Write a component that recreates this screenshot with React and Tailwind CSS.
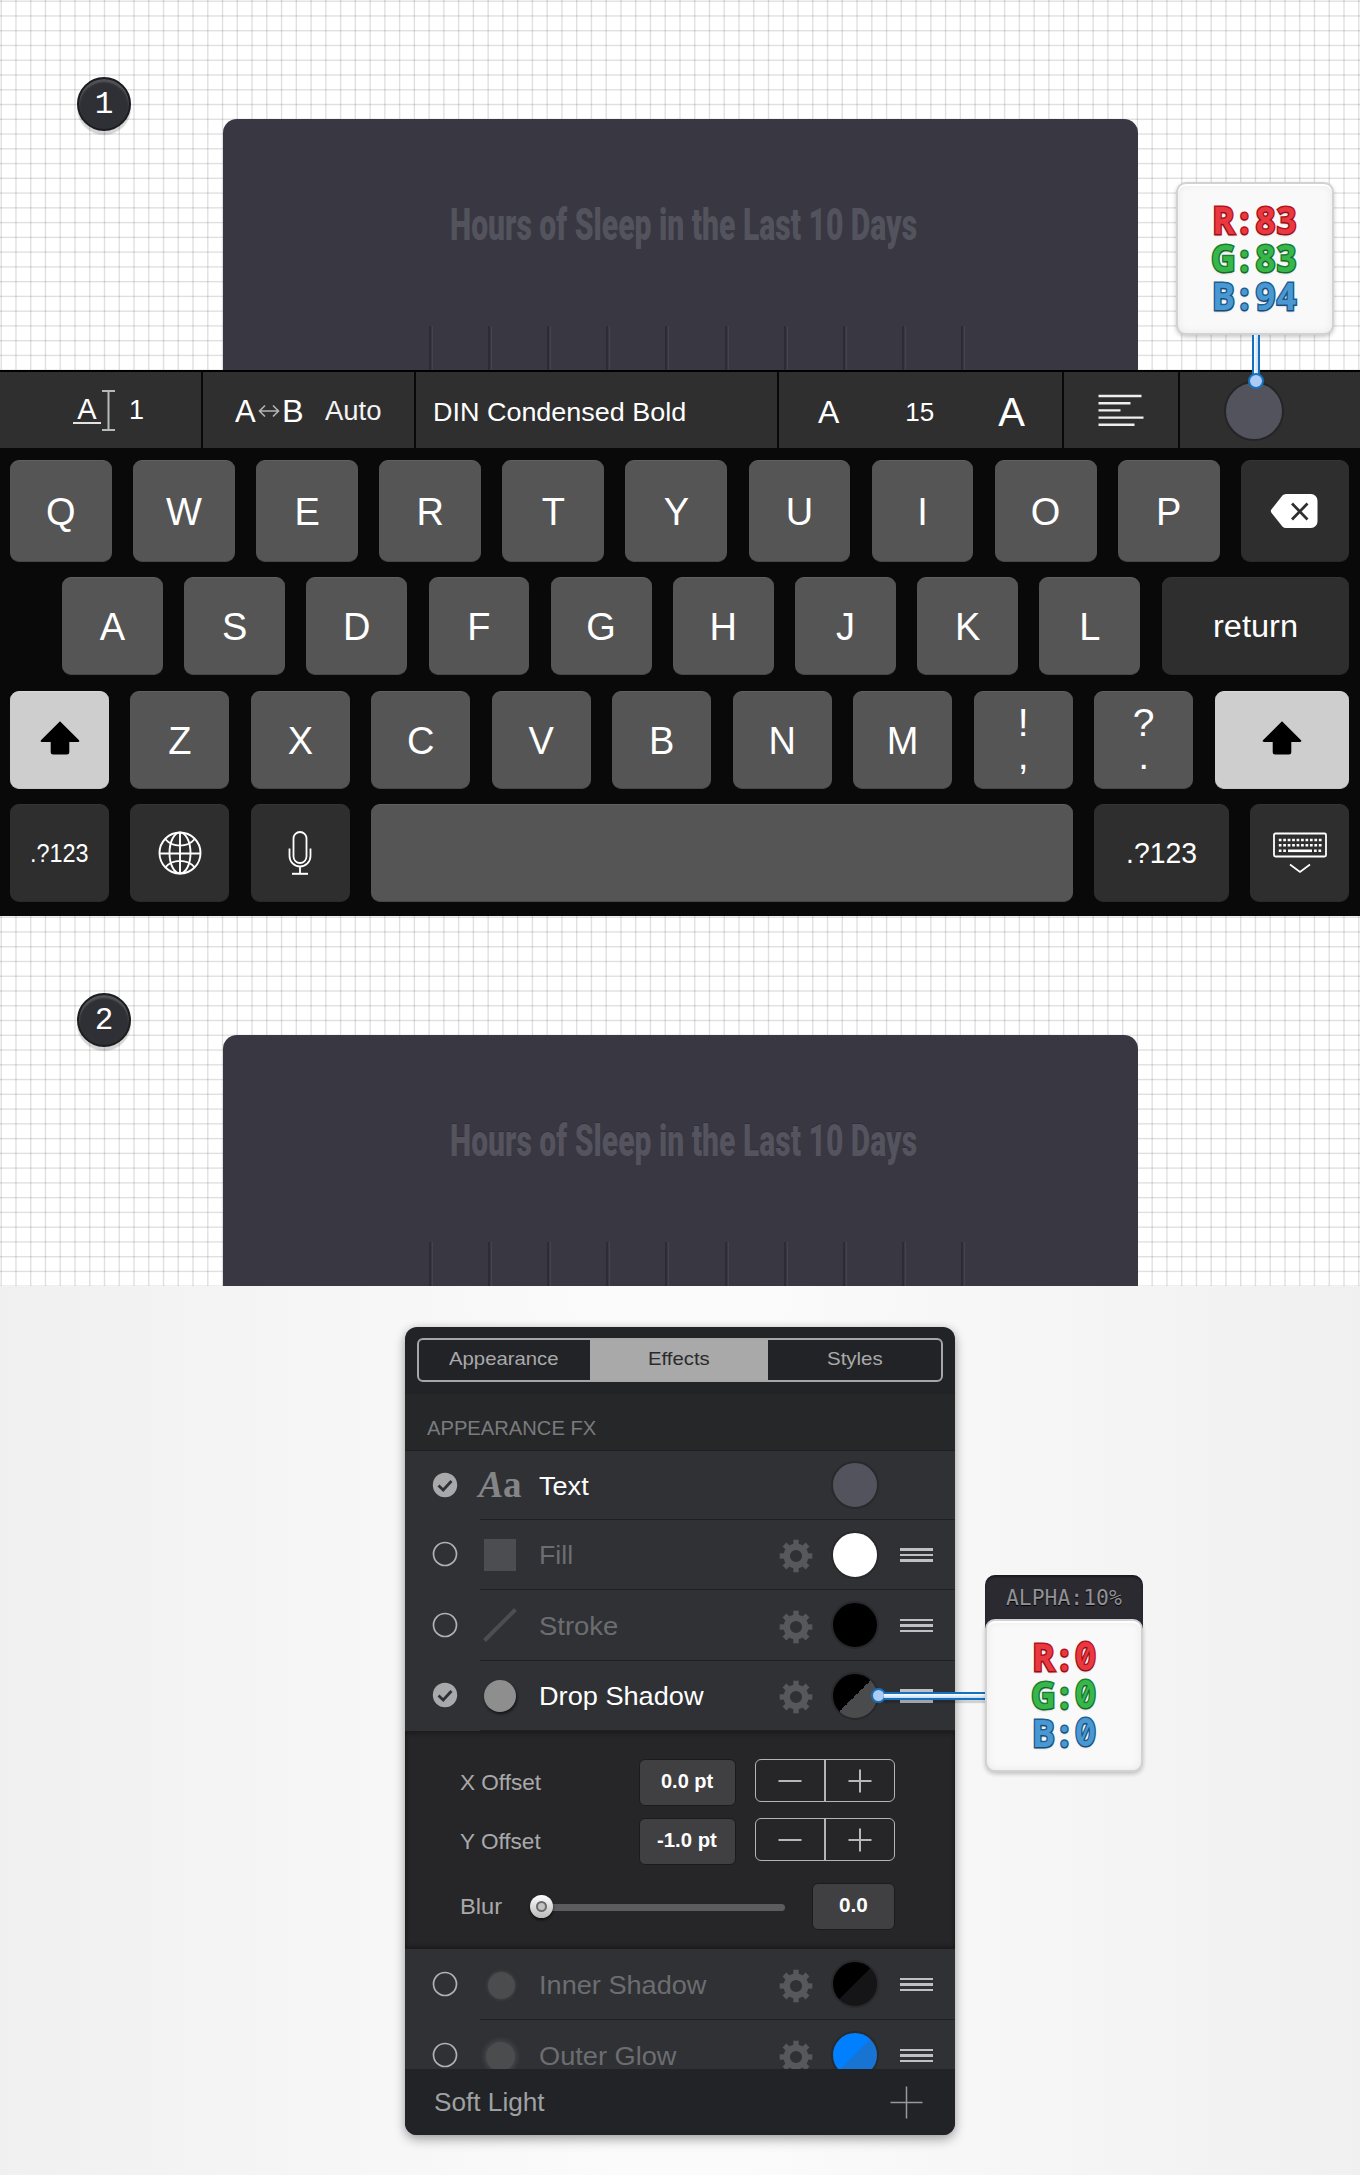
import { useLayoutEffect, useRef, useState } from "react";

const SANS = "font-['Liberation_Sans',Arial,sans-serif]";

/* Single-line label stretched horizontally so that it occupies exactly `w` pixels. */
function Fit({ w, className = "", children }) {
  const ref = useRef(null);
  const [scale, setScale] = useState(1);
  useLayoutEffect(() => {
    if (ref.current) setScale(w / ref.current.offsetWidth);
  }, [w, children]);
  return (
    <span className="block shrink-0" style={{ width: w }}>
      <span
        ref={ref}
        className={`inline-block origin-left whitespace-nowrap ${className}`}
        style={{ transform: `scaleX(${scale})` }}
      >
        {children}
      </span>
    </span>
  );
}

/* ---------- Canvas preview ---------- */

function CanvasPreview({ step, etched }) {
  return (
    <section className="relative flex h-[370px] justify-center overflow-hidden bg-white bg-[repeating-linear-gradient(to_right,rgba(0,0,0,0)_0px,rgba(0,0,0,0.12)_1px,rgba(0,0,0,0.12)_1.4px,rgba(0,0,0,0)_2.4px,rgba(0,0,0,0)_14.756px),repeating-linear-gradient(to_bottom,rgba(0,0,0,0)_0px,rgba(0,0,0,0.12)_1px,rgba(0,0,0,0.12)_1.4px,rgba(0,0,0,0)_2.4px,rgba(0,0,0,0)_14.76px)]">
      <div className="absolute left-[77px] top-[77px] flex size-[54px] items-center justify-center rounded-full border-2 border-[#1c1d20] bg-[#2f3035] shadow-[0_4px_1px_rgba(0,0,0,0.16),inset_0_3px_2px_rgba(255,255,255,0.18)]">
        <span className="font-['Liberation_Mono',monospace] text-[31px] leading-none text-white">{step}</span>
      </div>
      <div className="mt-[119px] flex w-[915px] flex-col items-center rounded-t-[14px] bg-[#383742]">
        <div className="ml-[7px] mt-[80px] h-[52px]">
          <Fit
            w={467}
            className={
              etched
                ? "font-[Roboto,sans-serif] text-[44px] font-black leading-[52px] text-[#54535e] [text-shadow:0_-1px_0_#302f39]"
                : "font-[Roboto,sans-serif] text-[44px] font-black leading-[52px] text-[#53535d]"
            }
          >
            Hours of Sleep in the Last 10 Days
          </Fit>
        </div>
        <div className="ml-[34px] mt-auto flex h-[44px] w-[536px] justify-between">
          {Array.from({ length: 10 }, (_, i) => (
            <i key={i} className="h-full w-[4px] border-l-2 border-r border-l-[#2d2c36] border-r-[#44434e]" />
          ))}
        </div>
      </div>
    </section>
  );
}

/* ---------- Text toolbar ---------- */

function Toolbar() {
  return (
    <div className={`relative flex h-[78px] border-t-2 border-black bg-[#2f2f2f] pt-px leading-none text-white ${SANS}`}>
      <div className="-mt-px flex w-[203px] items-center border-r-2 border-[#080808] pl-[73px] pt-px">
        <svg width="44" height="44" viewBox="0 0 44 44" fill="none" stroke="#e2e2e2" strokeWidth="2">
          <text x="4.2" y="29.5" fill="#fff" stroke="none" fontSize="29" fontFamily="Liberation Sans, sans-serif">A</text>
          <path d="M0 34h28" />
          <path d="M29 2h13M29 41h13M35.500 2v39" stroke="#b9b9b9" />
        </svg>
        <span className="ml-[12px] text-[27px]">1</span>
      </div>
      <div className="-mt-px flex w-[213px] items-center border-r-2 border-[#080808] pl-[32px] pt-[2px]">
        <span className="text-[31px]">A</span>
        <svg className="mx-[2px]" width="22" height="14" viewBox="0 0 22 14" fill="none" stroke="#b5b5b5" strokeWidth="1.6">
          <path d="M1.500 7h19M7 1.500L1.500 7L7 12.500M15 1.500L20.500 7L15 12.500" />
        </svg>
        <Fit w={22} className="text-[31px]">B</Fit>
        <span className="ml-[21px]"><Fit w={57} className="text-[27px] text-[#f3f3f3]">Auto</Fit></span>
      </div>
      <div className="-mt-px flex w-[363px] items-center border-r-2 border-[#080808] pl-[17px] pt-[3px]">
        <Fit w={253} className="text-[26px] leading-[30px]">DIN Condensed Bold</Fit>
      </div>
      <div className="-mt-px flex w-[285px] items-center border-r-2 border-[#080808] pl-[39px] pt-[3px]">
        <span className="text-[32px]">A</span>
        <span className="ml-[66px] text-[26px]">15</span>
        <span className="ml-[64px] text-[40px]">A</span>
      </div>
      <div className="-mt-px flex w-[116px] items-center border-r-2 border-[#080808] pl-[34px]">
        <svg width="46" height="34" viewBox="0 0 46 34" fill="none" stroke="#efefef" strokeWidth="2.4">
          <path d="M0.500 3h43M0.500 10.200h32M0.500 17.400h22M0.500 24.600h45M0.500 31.800h36" />
        </svg>
      </div>
      <div className="flex flex-1 items-center pl-[44px]">
        <span className="size-[60px] rounded-full border-2 border-[#252527] bg-[#53535e]" />
      </div>
    </div>
  );
}

/* ---------- Keyboard ---------- */

const KEY = "flex items-center justify-center rounded-[9px] border-t border-b";
const LIGHT = "border-t-[#606060] border-b-[#474747] bg-[#555555]";
const DARK = "border-t-[#343434] border-b-[#292929] bg-[#2e2e2e]";
const ACTIVE = "border-t-[#d8d8d8] border-b-[#c4c4c4] bg-[#cecece]";

function Letter({ c }) {
  return <div className={`${KEY} ${LIGHT} flex-1 pt-[2px] text-[38px] leading-none`}>{c}</div>;
}

function ShiftArrow() {
  return (
    <svg className="-mt-[4px]" width="40" height="34" viewBox="0 0 40 34">
      <path d="M20 0.300L38.800 19c1 1 .6 2-.7 2H29.300v10a2.500 2.500 0 0 1-2.500 2.500H13.200a2.500 2.500 0 0 1-2.500-2.500V21H1.900c-1.300 0-1.700-1-.7-2z" fill="#000" />
    </svg>
  );
}

function Backspace() {
  return (
    <svg className="mr-px" width="48" height="36" viewBox="0 0 48 36">
      <path d="M16 1h25a6.500 6.500 0 0 1 6.500 6.500v21A6.500 6.500 0 0 1 41 35H16a5 5 0 0 1-3.600-1.600L1.800 20.300a3.200 3.200 0 0 1 0-4.400L12.400 2.600A5 5 0 0 1 16 1z" fill="#fff" />
      <path d="M22 10.500L37.500 26.500M37.500 10.500L22 26.500" stroke="#2f2f2f" strokeWidth="2.700" />
    </svg>
  );
}

function GlobeIcon() {
  return (
    <svg className="ml-px" width="44" height="44" viewBox="0 0 44 44" fill="none" stroke="#fff" strokeWidth="1.900">
      <circle cx="22" cy="22" r="20.500" />
      <ellipse cx="22" cy="22" rx="10.500" ry="20.500" />
      <path d="M22 1.500v41M1.500 22.500h41M7.200 8c4 4.700 9 6.600 14.800 6.600S32.800 12.700 36.800 8M7.200 36.500c4-4.700 9-6.600 14.800-6.600s10.800 1.900 14.800 6.600" />
    </svg>
  );
}

function MicIcon() {
  return (
    <svg width="24" height="44" viewBox="0 0 24 44" fill="none" stroke="#fff" strokeWidth="1.800">
      <rect x="5.500" y="1" width="13" height="31" rx="6.500" />
      <path d="M1.500 17.500v7.500a10.500 10.500 0 0 0 21 0v-7.500M12 35.500v7" />
      <path d="M4 42.800h16" strokeWidth="2" />
    </svg>
  );
}

function HideKeyboardIcon() {
  return (
    <svg className="-mt-px" width="56" height="42" viewBox="0 0 56 42" fill="none" stroke="#fff">
      <rect x="2" y="1.500" width="52" height="23" rx="1.500" strokeWidth="1.800" />
      <path d="M6.800 8h43M6.800 13.300h43" strokeWidth="2.600" strokeDasharray="2.700 1.750" />
      <path d="M6.800 18.800h7.200M42 18.800h7.800" strokeWidth="2.600" strokeDasharray="2.700 1.750" />
      <path d="M16 18.800h24" strokeWidth="2.600" />
      <path d="M18 32.500l10 7.500l10-7.500" strokeWidth="1.700" />
    </svg>
  );
}

function Keyboard() {
  return (
    <div className={`flex h-[468px] flex-col gap-[15px] bg-[#090909] pl-[10px] pr-[11px] pt-[12px] text-white ${SANS}`}>
      <div className="flex h-[102px] gap-[21.300px]">
        {"QWERTYUIOP".split("").map((c) => <Letter key={c} c={c} />)}
        <div className={`${KEY} ${DARK} w-[108px]`}><Backspace /></div>
      </div>
      <div className="flex h-[98px] gap-[21.300px] pl-[52px]">
        {"ASDFGHJKL".split("").map((c) => <Letter key={c} c={c} />)}
        <div className={`${KEY} ${DARK} w-[187.500px] leading-none`}>
          <Fit w={85} className="text-[31px] leading-none">return</Fit>
        </div>
      </div>
      <div className="mt-px flex h-[98px] gap-[21.300px]">
        <div className={`${KEY} ${ACTIVE} w-[99px]`}><ShiftArrow /></div>
        {"ZXCVBNM".split("").map((c) => <Letter key={c} c={c} />)}
        {["!,", "?."].map((p) => (
          <div key={p} className={`${KEY} ${LIGHT} flex-1 flex-col text-[39px] leading-[36px]`}>
            <span className="mt-[3px]">{p[0]}</span>
            <span className="-mt-[3px] mb-[5px]">{p[1]}</span>
          </div>
        ))}
        <div className={`${KEY} ${ACTIVE} w-[134.500px]`}><ShiftArrow /></div>
      </div>
      <div className="flex h-[98px] gap-[21.300px] leading-none">
        <div className={`${KEY} ${DARK} w-[99px]`}><Fit w={59} className="text-[25px] leading-none">.?123</Fit></div>
        <div className={`${KEY} ${DARK} w-[99px]`}><GlobeIcon /></div>
        <div className={`${KEY} ${DARK} w-[99px]`}><MicIcon /></div>
        <div className={`${KEY} ${LIGHT} flex-1`} />
        <div className={`${KEY} ${DARK} w-[134.500px]`}><Fit w={71} className="text-[30px] leading-none">.?123</Fit></div>
        <div className={`${KEY} ${DARK} w-[99px]`}><HideKeyboardIcon /></div>
      </div>
    </div>
  );
}

/* ---------- Colour callouts ---------- */

const CHANNELS = {
  R: "text-[#ea3840] [-webkit-text-stroke:3px_#b3131c]",
  G: "text-[#38b64a] [-webkit-text-stroke:3px_#177f34]",
  B: "text-[#4a98d2] [-webkit-text-stroke:3px_#1b5f94]",
};

function Channel({ name, value }) {
  return (
    <div className={`flex h-[38px] items-center justify-center text-[38px] font-bold leading-none [paint-order:stroke_fill] [text-shadow:0_2px_2px_rgba(0,0,0,0.2)] ${CHANNELS[name]}`}>
      {`${name}:${value}`.split("").map((c, i) => (
        <span
          key={i}
          className={
            c === "0"
              ? "flex w-[21px] scale-x-[0.82] justify-center font-[Inter,sans-serif] [font-feature-settings:'zero']"
              : "flex w-[21px] scale-x-[0.9] justify-center font-['Open_Sans','Noto_Sans',sans-serif]"
          }
        >
          {c}
        </span>
      ))}
    </div>
  );
}

function RgbCard({ r, g, b }) {
  return (
    <div className="h-[153px] w-[158px] rounded-[10px] border-2 border-[#d2d2d2] bg-[#f9f9f9] pt-[16px] shadow-[0_2px_4px_rgba(0,0,0,0.22),inset_0_2px_0_#fff,inset_0_0_8px_rgba(0,0,0,0.07)]">
      <Channel name="R" value={r} />
      <Channel name="G" value={g} />
      <Channel name="B" value={b} />
    </div>
  );
}

/* ---------- Effects panel ---------- */

function Gear() {
  return (
    <svg width="34" height="34" viewBox="-17 -17 34 34" fill="none" stroke="#57585b">
      <circle r="9.300" strokeWidth="6.400" />
      {[0, 45, 90, 135, 180, 225, 270, 315].map((a) => (
        <path key={a} d="M0-11V-16.300" strokeWidth="5.400" transform={`rotate(${a})`} />
      ))}
    </svg>
  );
}

function Toggle({ on }) {
  return on ? (
    <svg width="26" height="26" viewBox="0 0 26 26" fill="none">
      <circle cx="13" cy="13" r="12.200" fill="#a9a9ab" />
      <path d="M6.500 13.500l4.700 4.500l8.300-9" stroke="#303135" strokeWidth="2.800" />
    </svg>
  ) : (
    <svg width="26" height="26" viewBox="0 0 26 26" fill="none">
      <circle cx="13" cy="13" r="11.500" stroke="#b1b1b3" strokeWidth="1.700" />
    </svg>
  );
}

function Handle() {
  return (
    <div className="mt-px flex flex-col gap-[3px]">
      <i className="h-[2.500px] w-[33px] bg-[#c0bfc3]" />
      <i className="h-[2.500px] w-[33px] bg-[#c0bfc3]" />
      <i className="h-[2.500px] w-[33px] bg-[#c0bfc3]" />
    </div>
  );
}

function EffectRow({ on, icon, label, w, swatch, controls = true, height }) {
  return (
    <div className={`flex shrink-0 bg-[#303135] ${height}`}>
      <div className="flex w-[75px] items-center pb-[2px] pl-[27px]"><Toggle on={on} /></div>
      <div className="flex flex-1 items-center border-b border-[#1f2023]">
        <div className="flex w-[40px] justify-center">{icon}</div>
        <div className="w-[253px] pl-[19px] pt-[2px]">
          <Fit w={w} className={on ? "text-[26px] leading-[30px] text-white" : "text-[26px] leading-[30px] text-[#6c6d70]"}>{label}</Fit>
        </div>
        <div className="flex w-[45px] justify-center pt-[3px]">{controls && <Gear />}</div>
        <div className="flex w-[73px] justify-center">
          <span className={`size-[48px] rounded-full border-2 border-[#29292c] ${swatch}`} />
        </div>
        <div className="flex w-[50px] justify-center">{controls && <Handle />}</div>
      </div>
    </div>
  );
}

function ValueBox({ width, w, children }) {
  return (
    <div className={`flex h-[47px] items-center justify-center rounded-[6px] border border-[#1b1b1c] bg-[#404042] pr-px ${width}`}>
      <Fit w={w} className="text-[20px] font-bold leading-[24px] text-white">{children}</Fit>
    </div>
  );
}

function Stepper() {
  return (
    <div className="flex h-[43px] w-[140px] rounded-[6px] border-[1.500px] border-[#b4b4b6]">
      <div className="flex w-[70px] items-center justify-center border-r-2 border-[#b4b4b6]">
        <svg width="24" height="24" viewBox="0 0 24 24" stroke="#b8b8ba" strokeWidth="2"><path d="M0.500 12h23" /></svg>
      </div>
      <div className="flex flex-1 items-center justify-center">
        <svg width="24" height="24" viewBox="0 0 24 24" stroke="#b8b8ba" strokeWidth="2"><path d="M0.500 12h23M12 0.500v23" /></svg>
      </div>
    </div>
  );
}

function ShadowSettings() {
  return (
    <div className="h-[218px] shrink-0 bg-[#262628] pl-[55px] pt-[28px] text-[#a9a9ab] shadow-[inset_0_3px_4px_rgba(0,0,0,0.25),inset_0_-3px_4px_rgba(0,0,0,0.25)]">
      <div className="flex h-[46px] items-center">
        <div className="w-[179px]"><Fit w={81} className="text-[22px]">X Offset</Fit></div>
        <ValueBox width="w-[97px]" w={52}>0.0 pt</ValueBox>
        <div className="ml-[19px] pb-[3px]"><Stepper /></div>
      </div>
      <div className="mt-[13px] flex h-[46px] items-center">
        <div className="w-[179px]"><Fit w={81} className="text-[22px]">Y Offset</Fit></div>
        <ValueBox width="w-[97px]" w={60}>-1.0 pt</ValueBox>
        <div className="ml-[19px] pb-[3px]"><Stepper /></div>
      </div>
      <div className="mt-[19px] flex h-[46px] items-center">
        <div className="w-[70px]"><Fit w={42} className="text-[22px]">Blur</Fit></div>
        <span className="z-10 flex size-[23px] items-center justify-center rounded-full bg-gradient-to-b from-[#ffffff] to-[#b9b9b9] shadow-[0_2px_3px_rgba(0,0,0,0.6)]">
          <span className="size-[11px] rounded-full border-2 border-[#6a6a6a] bg-[#c2c2c2]" />
        </span>
        <span className="-ml-[4px] mt-[2px] h-[7px] w-[236px] rounded-r-full bg-[#5c5c5e]" />
        <div className="ml-[27px]"><ValueBox width="w-[83px]" w={29}>0.0</ValueBox></div>
      </div>
    </div>
  );
}

function EffectsPanel() {
  return (
    <div className={`flex h-[808px] w-[550px] flex-col overflow-hidden rounded-[12px] bg-[#222326] shadow-[0_5px_12px_rgba(0,0,0,0.3),0_0_8px_rgba(0,0,0,0.12)] ${SANS}`}>
      <div className="h-[67px] shrink-0 px-[12px] pt-[11px]">
        <div className="flex h-[44px] rounded-[6px] border-2 border-[#a6a6a8] text-[#a9a9ab]">
          <div className="flex w-[171px] items-center justify-center pb-[2px] pr-[2px]"><Fit w={109} className="text-[19px]">Appearance</Fit></div>
          <div className="flex w-[178px] items-center justify-center bg-[#a9a9aa] pb-[2px] text-[#2b2b2e]"><Fit w={62} className="text-[19px]">Effects</Fit></div>
          <div className="flex flex-1 items-center justify-center pb-[2px]"><Fit w={56} className="text-[19px]">Styles</Fit></div>
        </div>
      </div>
      <div className="flex h-[57px] shrink-0 items-center border-b border-[#1f2022] bg-[#262729] pl-[22px] pt-[14px]">
        <Fit w={169} className="text-[21px] leading-[24px] text-[#7a7b7d]">APPEARANCE FX</Fit>
      </div>
      <EffectRow
        on
        height="h-[69px]"
        label="Text"
        w={50}
        controls={false}
        swatch="bg-[#53535e]"
        icon={
          <span className="flex whitespace-nowrap font-['Liberation_Serif',serif] text-[37px] font-bold leading-[40px] text-[#848587]">
            <span className="italic">A</span>
            <span>a</span>
          </span>
        }
      />
      <EffectRow height="h-[70px]" label="Fill" w={34} swatch="bg-white" icon={<span className="size-[32px] bg-[#4c4d50]" />} />
      <EffectRow
        height="h-[71px]"
        label="Stroke"
        w={79}
        swatch="bg-black"
        icon={<svg width="34" height="34" viewBox="0 0 34 34"><path d="M1.500 32.500L32.500 1.500" stroke="#4d4e51" strokeWidth="4" /></svg>}
      />
      <EffectRow
        on
        height="h-[70px]"
        label="Drop Shadow"
        w={165}
        swatch="bg-[linear-gradient(135deg,#000_50%,#4a4b4c_50%)]"
        icon={<span className="size-[32px] rounded-full bg-[#8e8e8f] shadow-[1px_2px_3px_rgba(0,0,0,0.6)]" />}
      />
      <ShadowSettings />
      <EffectRow
        height="h-[71px]"
        label="Inner Shadow"
        w={167}
        swatch="bg-[linear-gradient(135deg,#000_50%,#151517_50%)]"
        icon={<span className="ml-[3px] mt-[3px] size-[27px] rounded-full bg-[#4b4c4e] shadow-[0_0_3px_1px_#414245]" />}
      />
      <div className="h-[49px] shrink-0 overflow-hidden">
        <EffectRow
          height="h-[71px]"
          label="Outer Glow"
          w={138}
          swatch="bg-[linear-gradient(135deg,#0080ff_50%,#1874d2_50%)]"
          icon={<span className="mt-[2px] size-[29px] rounded-full bg-[#4b4c4e] shadow-[0_0_5px_2px_#46474a]" />}
        />
      </div>
      <div className="flex flex-1 items-center justify-between bg-[#222326] pl-[29px] pr-[32px] text-[#9fa0a2]">
        <Fit w={111} className="text-[25px] leading-[30px]">Soft Light</Fit>
        <svg width="33" height="33" viewBox="0 0 33 33" stroke="#98999b" strokeWidth="1.500"><path d="M0.500 16.500h32M16.500 0.500v32" /></svg>
      </div>
    </div>
  );
}

export default function App() {
  return (
    <div className="relative flex h-[2175px] w-[1360px] flex-col overflow-hidden bg-white">
      <CanvasPreview step="1" />
      <Toolbar />
      <Keyboard />
      <CanvasPreview step="2" etched />
      <section className="flex flex-1 justify-center bg-[linear-gradient(to_right,#f0f0f0,#fbfbfb_45%,#fbfbfb_55%,#f0f0f0)] pt-[41px]">
        <EffectsPanel />
      </section>

      {/* Callout for the text colour swatch */}
      <div className="absolute left-[1176px] top-[182px] flex w-[158px] flex-col items-center">
        <RgbCard r="83" g="83" b="94" />
        <span className="ml-[2px] h-[41px] w-[8px] border-x-2 border-[#1671bd] bg-gradient-to-r from-white to-[#c3dcf9]" />
        <span className="-mt-[3px] ml-[2px] size-[16px] rounded-full border-2 border-[#1671bd] bg-[#aecbf6]" />
      </div>

      {/* Callout for the drop shadow swatch */}
      <div className="absolute left-[871px] top-[1575px] flex items-start">
        <span className="mt-[113px] size-[15px] shrink-0 rounded-full border-2 border-[#1671bd] bg-[#aecbf6]" />
        <span className="-ml-[2px] mt-[117px] h-[8px] w-[101px] border-y-2 border-[#1671bd] bg-gradient-to-b from-white to-[#c3dcf9] shadow-[0_3px_1px_rgba(0,0,0,0.15)]" />
        <div className="flex w-[158px] flex-col rounded-t-[10px] bg-[linear-gradient(to_bottom,#2b2a30_56px,transparent_56px)]">
          <div className="flex h-[44px] items-center justify-center rounded-t-[10px] pt-[2px] shadow-[inset_0_2px_2px_rgba(0,0,0,0.4)]">
            <Fit w={116} className="font-['DejaVu_Sans_Mono',monospace] text-[21px] leading-[24px] text-[#919196] [text-shadow:0_1px_1px_#000]">ALPHA:10%</Fit>
          </div>
          <RgbCard r="0" g="0" b="0" />
        </div>
      </div>
    </div>
  );
}
